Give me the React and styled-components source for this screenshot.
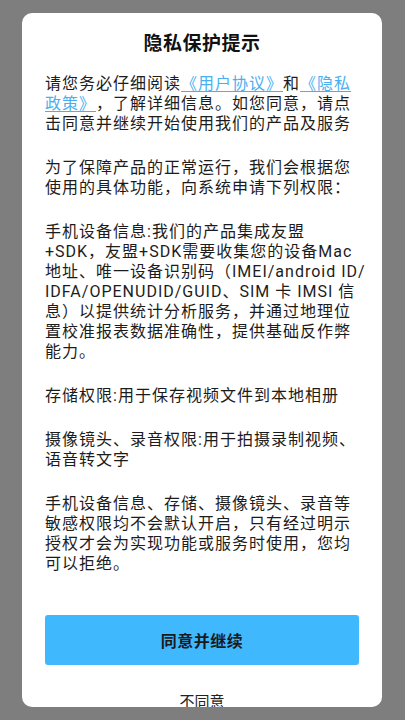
import React from 'react';
import styled, { createGlobalStyle } from 'styled-components';

const GlobalStyle = createGlobalStyle`
    html, body {
        margin: 0;
        padding: 0;
        background: #7e7e7e;
    }
    * {
        box-sizing: border-box;
    }
`

const Overlay = styled.div`
    width: 405px;
    height: 720px;
    padding: 13px 23px 13px 22px;
    background: #7e7e7e;
    font-family: Roboto, "Noto Sans CJK SC", sans-serif;
    text-spacing-trim: space-all;
    text-autospace: no-autospace;
`

const Card = styled.div`
    width: 360px;
    height: 694px;
    background: #fff;
    border-radius: 10px;
    overflow: hidden;
    padding: 19px 23px 0;
    display: flex;
    flex-direction: column;

    & > * {
        flex-shrink: 0;
    }
`

const Title = styled.h1`
    margin: 0;
    font-size: 19px;
    line-height: 24px;
    font-weight: 700;
    color: #111;
    text-align: center;
    letter-spacing: 0.5px;
`

const Body = styled.div`
    margin-top: 18px;
    display: flex;
    flex-direction: column;
    gap: 24px;
`

const Para = styled.p`
    margin: 0;
    font-size: 16px;
    line-height: 20px;
    letter-spacing: 1px;
    color: #1c1c1c;
    white-space: nowrap;
`

const Link = styled.a`
    color: #4aaff0;
    text-decoration: underline;
    text-underline-offset: 2px;
`

const AgreeButton = styled.button`
    margin-top: 41px;
    height: 50px;
    width: 100%;
    border: none;
    border-radius: 3px;
    background: #40b8fd;
    color: #1a1a1a;
    font-family: inherit;
    font-size: 16px;
    font-weight: 700;
    letter-spacing: 0.5px;
`

const RefuseText = styled.div`
    margin-top: 27px;
    text-align: center;
    font-size: 15px;
    line-height: 20px;
    color: #222;
`

const lines = (arr) => arr.map((l, i) => (
    <React.Fragment key={i}>{i > 0 && <br />}{l}</React.Fragment>
))

const App = () => {
    return (
        <>
            <GlobalStyle />
            <Overlay>
                <Card>
                    <Title>隐私保护提示</Title>
                    <Body>
                        <Para>
                            请您务必仔细阅读<Link>《用户协议》</Link>和<Link>《隐私<br />政策》</Link>，了解详细信息。如您同意，请点<br />
                            击同意并继续开始使用我们的产品及服务
                        </Para>
                        <Para>
                            {lines([
                                '为了保障产品的正常运行，我们会根据您',
                                '使用的具体功能，向系统申请下列权限：',
                            ])}
                        </Para>
                        <Para>
                            {lines([
                                '手机设备信息:我们的产品集成友盟',
                                '+SDK，友盟+SDK需要收集您的设备Mac',
                                '地址、唯一设备识别码（IMEI/android ID/',
                                'IDFA/OPENUDID/GUID、SIM 卡 IMSI 信',
                                '息）以提供统计分析服务，并通过地理位',
                                '置校准报表数据准确性，提供基础反作弊',
                                '能力。',
                            ])}
                        </Para>
                        <Para>存储权限:用于保存视频文件到本地相册</Para>
                        <Para>
                            {lines([
                                '摄像镜头、录音权限:用于拍摄录制视频、',
                                '语音转文字',
                            ])}
                        </Para>
                        <Para>
                            {lines([
                                '手机设备信息、存储、摄像镜头、录音等',
                                '敏感权限均不会默认开启，只有经过明示',
                                '授权才会为实现功能或服务时使用，您均',
                                '可以拒绝。',
                            ])}
                        </Para>
                    </Body>
                    <AgreeButton>同意并继续</AgreeButton>
                    <RefuseText>不同意</RefuseText>
                </Card>
            </Overlay>
        </>
    )
}

export default App;
